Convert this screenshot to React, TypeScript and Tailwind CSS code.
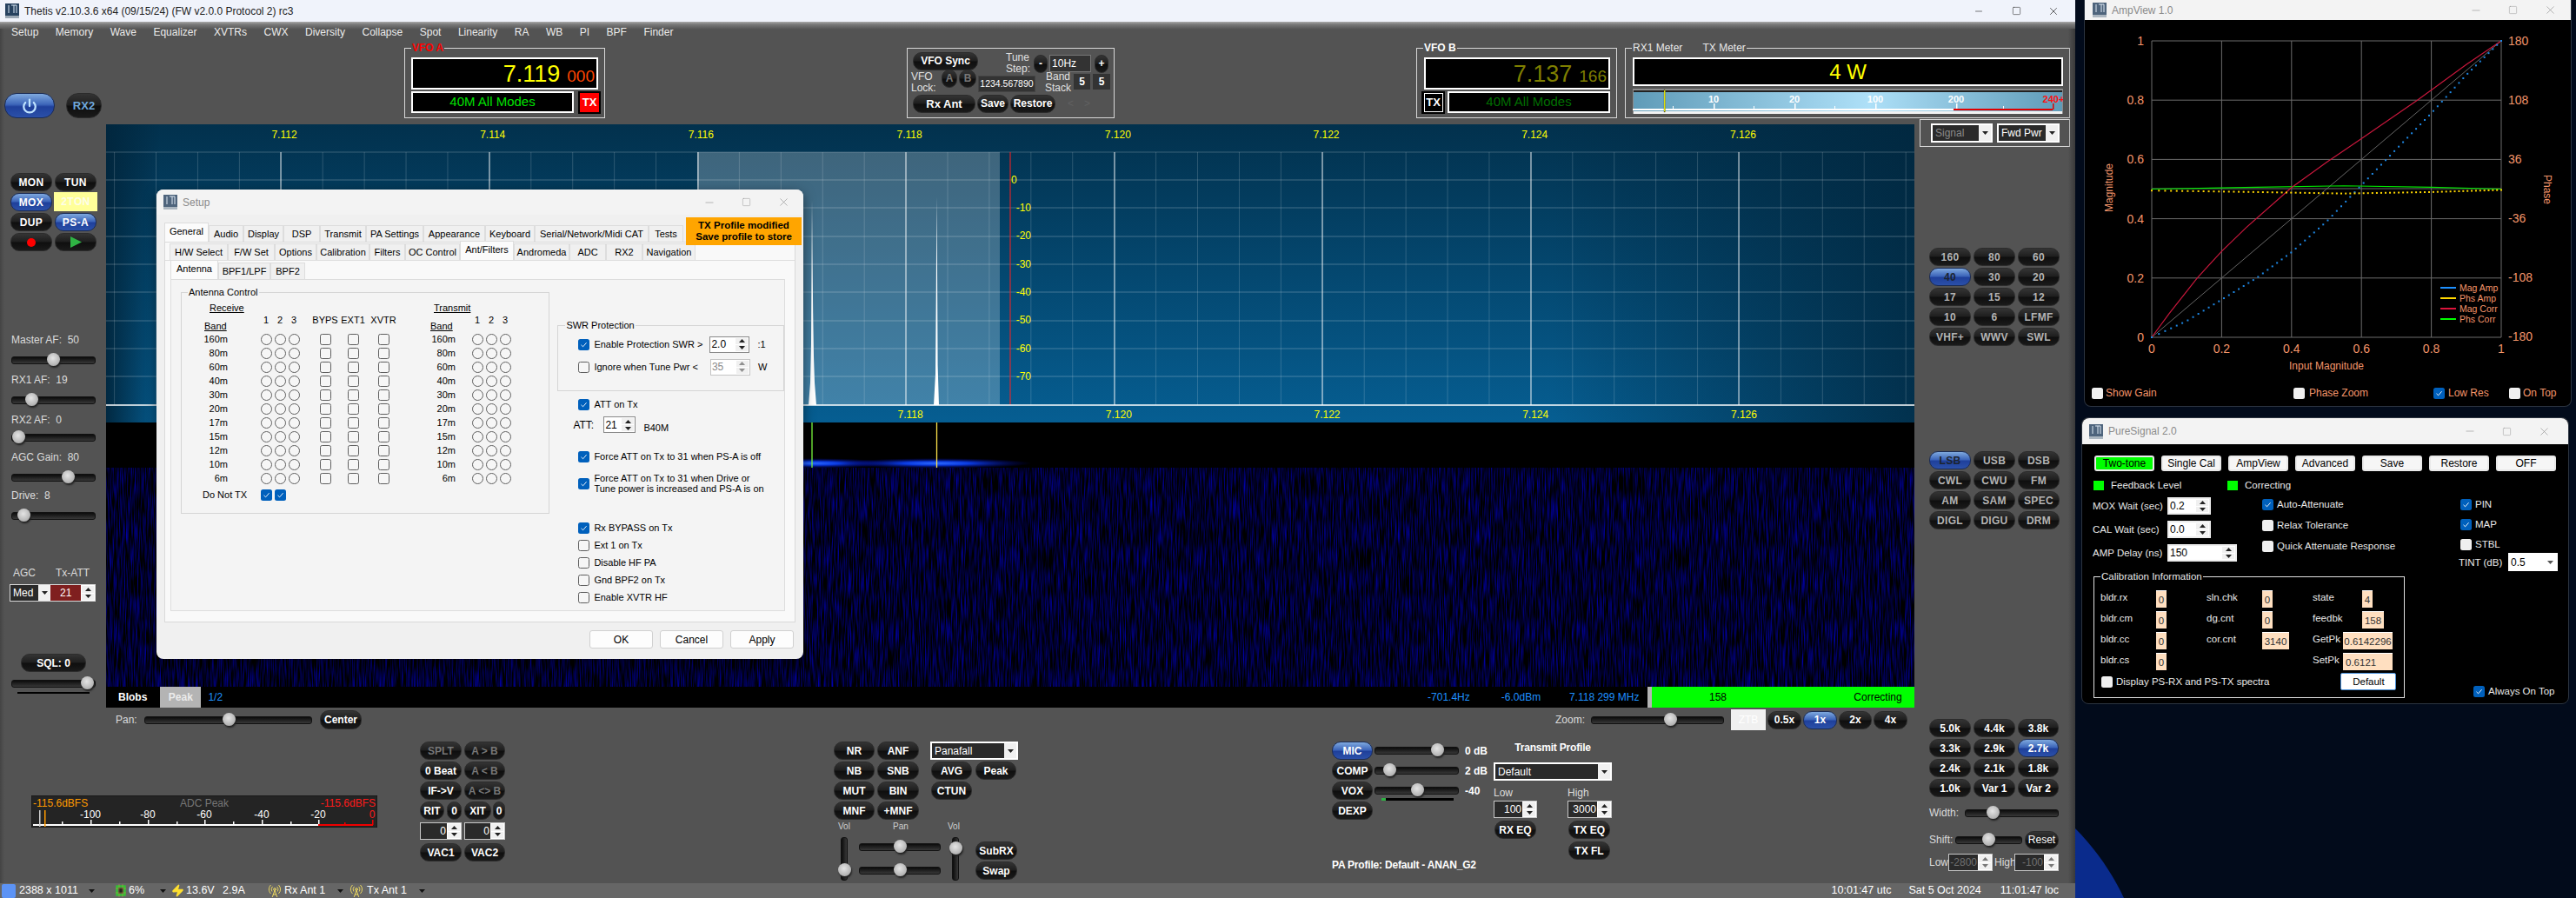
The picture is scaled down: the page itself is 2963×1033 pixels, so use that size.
import type { ReactNode } from "react"
import { Minus, Power, RadioTower, Square, X, Zap } from "lucide-react"

const cx = (...p: (string | false | undefined)[]) => p.filter(Boolean).join(" ")

function Btn({ children, className, blue, dim, gray }: { children?: ReactNode; className?: string; blue?: boolean; dim?: boolean; gray?: boolean }) {
  return (
    <div
      className={cx(
        "flex h-[21px] items-center justify-center whitespace-nowrap rounded-[10px] border text-[12px] font-bold",
        blue
          ? "border-[#1b2c55] bg-[linear-gradient(180deg,#7fa9de_0%,#3d66ba_45%,#1f409b_55%,#2b50a9_100%)]"
          : "border-[#2c2c2c] bg-[linear-gradient(180deg,#343434_0%,#1e1e1e_48%,#0e0e0e_52%,#1a1a1a_100%)]",
        dim ? "text-[#777777]" : gray ? (blue ? "text-[#1c2430]" : "text-[#b4b4b4]") : "text-white",
        className,
      )}
    >
      {children}
    </div>
  )
}

function Slider({ at, className }: { at: number; className?: string }) {
  return (
    <div className={cx("relative h-[9px] rounded-[3px] border border-[#111111] bg-[linear-gradient(180deg,#0c0c0c,#383838)]", className)}>
      <Thumb style={{ left: at - 8, top: -5 }} />
    </div>
  )
}

function Thumb({ style }: { style: { left?: number; top?: number } }) {
  return <div style={style} className="absolute h-[15px] w-[15px] rounded-full bg-[radial-gradient(circle_at_45%_40%,#e4e4e4,#b9b9b9_60%,#8c8c8c)] shadow-[1px_2px_2px_#222222]" />
}

function VSlider({ at, className }: { at: number; className?: string }) {
  return (
    <div className={cx("relative h-[50px] w-[8px] rounded-[3px] border border-[#111111] bg-[linear-gradient(90deg,#0c0c0c,#383838)]", className)}>
      <Thumb style={{ left: -4, top: at }} />
    </div>
  )
}

function Tri({ up, c = "#222222" }: { up?: boolean; c?: string }) {
  return (
    <svg width="7" height="4" viewBox="0 0 7 4">
      <path d={up ? "M3.5 0L7 4H0z" : "M0 0h7L3.5 4z"} fill={c} />
    </svg>
  )
}

function SpinCol({ className, c }: { className?: string; c?: string }) {
  return (
    <div className={cx("flex h-full w-[16px] shrink-0 flex-col gap-[1px] bg-white p-[1px]", className)}>
      <div className="flex flex-1 items-center justify-center bg-[#f0f0f0]"><Tri up c={c} /></div>
      <div className="flex flex-1 items-center justify-center bg-[#f0f0f0]"><Tri c={c} /></div>
    </div>
  )
}

function DarkSpin({ value, dim, className }: { value: string; dim?: boolean; className?: string }) {
  return (
    <div className={cx("flex h-[20px] items-stretch border border-[#c8c8c8] bg-[#2a2a2a]", className)}>
      <div className={cx("flex min-w-0 flex-1 items-center justify-end pr-[1px] text-[12px]", dim ? "text-[#707070]" : "text-white")}>{value}</div>
      <SpinCol className="w-[14px] bg-[#dddddd]" c={dim ? "#777777" : "#222222"} />
    </div>
  )
}

function DarkSelect({ value, className, dim }: { value: string; className?: string; dim?: boolean }) {
  return (
    <div className={cx("flex items-stretch border-2 border-white bg-[#2a2a2a]", className)}>
      <div className={cx("flex flex-1 items-center pl-[3px] text-[12px]", dim ? "text-[#8a8a8a]" : "text-white")}>{value}</div>
      <div className="flex w-[14px] items-center justify-center bg-[#f0f0f0]"><Tri /></div>
    </div>
  )
}

function AppIcon({ dim }: { dim?: boolean }) {
  return (
    <svg width="16" height="17" viewBox="0 0 16 17" className={cx("shrink-0", dim && "opacity-80")}>
      <rect width="16" height="14" fill="#26415f" />
      <path d="M4 2v9M7 2h6M10 2v9M13 2v9" stroke="#d7e6f5" strokeWidth="1" fill="none" />
      <rect y="14" width="16" height="3" fill="#9aa7b4" />
    </svg>
  )
}

function WinBtns({ className }: { className?: string }) {
  return (
    <div className={cx("ml-auto flex items-center text-[#8c8c8c]", className)}>
      <Minus size={14} strokeWidth={1} />
      <Square size={11} strokeWidth={1} className="ml-[30px]" />
      <X size={15} strokeWidth={1} className="ml-[30px]" />
    </div>
  )
}

function Check({ on, dark, label, className, gap = "ml-[5px]" }: { on?: boolean; dark?: boolean; label?: ReactNode; className?: string; gap?: string }) {
  return (
    <div className={cx("flex items-center whitespace-nowrap", className)}>
      <div
        className={cx(
          "flex h-[13px] w-[13px] shrink-0 items-center justify-center rounded-[2.5px]",
          on ? "bg-[#0060bc]" : dark ? "bg-[#f0f0f0]" : "border border-[#5f5f5f] bg-[#f6f6f6]",
        )}
      >
        {on && (
          <svg width="9" height="9" viewBox="0 0 9 9">
            <path d="M1.5 4.8L3.6 6.8L7.6 2.2" fill="none" stroke="#ffffff" strokeWidth="0.9" />
          </svg>
        )}
      </div>
      {label != null && <span className={gap}>{label}</span>}
    </div>
  )
}

function Radio() {
  return <div className="h-[13px] w-[13px] rounded-full border border-[#5f5f5f] bg-[#f6f6f6]" />
}

function LightSpin({ value, className, disabled }: { value: string; className?: string; disabled?: boolean }) {
  return (
    <div className={cx("flex h-[19px] items-stretch border bg-white text-[12px]", disabled ? "border-[#c4c4c4] text-[#8a8a8a]" : "border-[#8a8a8a] text-black", className)}>
      <div className="flex flex-1 items-center pl-[1px]">{value}</div>
      <SpinCol className="w-[14px]" c={disabled ? "#909090" : "#222222"} />
    </div>
  )
}

const bands = ["160m", "80m", "60m", "40m", "30m", "20m", "17m", "15m", "12m", "10m", "6m"]

const tabs1: [string, string][] = [
  ["General", "w-[51px]"], ["Audio", "w-[40px]"], ["Display", "w-[46px]"], ["DSP", "w-[42px]"], ["Transmit", "w-[53px]"],
  ["PA Settings", "w-[66px]"], ["Appearance", "w-[71px]"], ["Keyboard", "w-[57px]"], ["Serial/Network/Midi CAT", "w-[131px]"], ["Tests", "w-[40px]"],
]
const tabs2: [string, string][] = [
  ["H/W Select", "w-[67px]"], ["F/W Set", "w-[54px]"], ["Options", "w-[48px]"], ["Calibration", "w-[61px]"], ["Filters", "w-[41px]"], ["OC Control", "w-[63px]"],
  ["Ant/Filters", "w-[62px]"], ["Andromeda", "w-[64px]"], ["ADC", "w-[42px]"], ["RX2", "w-[42px]"], ["Navigation", "w-[61px]"],
]
const tabs3: [string, string][] = [["Antenna", "w-[55px]"], ["BPF1/LPF", "w-[60px]"], ["BPF2", "w-[40px]"]]

function TabRow({ items, active, className }: { items: [string, string][]; active: string; className?: string }) {
  return (
    <div className={cx("flex items-end", className)}>
      {items.map(([t, w]) => (
        <div
          key={t}
          className={cx(
            "flex shrink-0 items-center justify-center whitespace-nowrap border border-b-0 border-[#dddddd]",
            t === active ? "h-[22px] bg-[#fbfbfb] pb-[3px]" : "h-[19px] bg-[#f0f0f0]",
            w,
          )}
        >
          {t}
        </div>
      ))}
    </div>
  )
}

function AntennaGroup() {
  return (
    <fieldset className="ml-[11px] mt-[7px] h-[262px] w-[425px] border border-[#d5d5d5]">
      <legend className="ml-[7px] px-[1px] leading-[14px]">Antenna Control</legend>
      <div className="mt-[4px] grid grid-cols-[53px_36px_16px_16px_16px_12px_32px_32px_38px_64px_17px_16px_16px_16px] auto-rows-[16px]">
        <div className="col-span-9 h-[16px] pl-[32px] underline">Receive</div>
        <div className="col-span-5 whitespace-nowrap pl-[39px] underline">Transmit</div>
        <div className="col-span-1 row-span-1 translate-y-[5px] pl-[26px] underline">Band</div>
        <div />
        {["1", "2", "3"].map(n => <div key={n} className="-translate-y-[2px] text-center">{n}</div>)}
        <div />
        {["BYPS", "EXT1", "XVTR"].map(n => <div key={n} className="-translate-y-[2px] text-center">{n}</div>)}
        <div className="translate-y-[5px] pl-[35px] underline">Band</div>
        <div />
        {["1", "2", "3"].map(n => <div key={n + "t"} className="-translate-y-[2px] text-center">{n}</div>)}
      </div>
      <div className="mt-[3px] grid grid-cols-[53px_36px_16px_16px_16px_12px_32px_32px_38px_64px_17px_16px_16px_16px] auto-rows-[16px] items-center justify-items-center">
        {bands.map(b => (
          <div key={b} className="contents">
            <div className="justify-self-end">{b}</div>
            <div />
            <Radio /><Radio /><Radio />
            <div />
            <Check /><Check /><Check />
            <div className="justify-self-end">{b}</div>
            <div />
            <Radio /><Radio /><Radio />
          </div>
        ))}
      </div>
      <div className="mt-[3px] flex h-[16px] items-center pl-[24px]">
        <span className="w-[66px]">Do Not TX</span>
        <Check on className="ml-[1px]" />
        <Check on className="ml-[3px]" />
      </div>
    </fieldset>
  )
}

function SetupDialog() {
  return (
    <div className="absolute left-[180px] top-[218px] flex h-[540px] w-[744px] flex-col rounded-[8px] bg-[#f0f0f0] text-[11px] leading-[14px] text-black shadow-[0_4px_14px_rgba(0,0,0,0.5)]">
      <div className="flex h-[29px] items-center rounded-t-[8px] bg-[#f3f3f3] pl-[8px] pr-[15px]">
        <AppIcon dim />
        <span className="ml-[6px] text-[12px] text-[#8a8a8a]">Setup</span>
        <WinBtns />
      </div>
      <div className="relative mx-[9px] mt-[9px]">
        <TabRow items={tabs1} active="General" />
        <div className="absolute left-[600px] top-[-6px] flex h-[32px] w-[133px] flex-col items-center justify-center bg-[#ffa500] text-[11.5px] font-bold leading-[13px]">
          <div>TX Profile modified</div>
          <div>Save profile to store</div>
        </div>
        <div className="h-[438px] border border-[#d9d9d9] bg-[#f9f9f9]">
          <TabRow items={tabs2} active="Ant/Filters" className="ml-[5px] h-[20px]" />
          <div className="mx-[0px] h-[415px] border-t border-[#dddddd] pl-[6px] pr-[1px]">
            <TabRow items={tabs3} active="Antenna" className="h-[21px] pt-[0px]" />
            <div className="mr-[10px] flex h-[382px] border border-[#dddddd] bg-[#f4f4f4]">
              <AntennaGroup />
              <div className="ml-[9px] flex w-[261px] flex-col">
                <fieldset className="mt-[45px] h-[83px] border border-[#d5d5d5]">
                  <legend className="ml-[8px] px-[1px] leading-[14px]">SWR Protection</legend>
                  <div className="ml-[23px] mt-[6px] flex h-[18px] items-center">
                    <Check on label="Enable Protection SWR >" />
                    <LightSpin value="2.0" className="ml-[8px] w-[46px]" />
                    <span className="ml-[9px]">:1</span>
                  </div>
                  <div className="ml-[23px] mt-[8px] flex h-[18px] items-center">
                    <Check label="Ignore when Tune Pwr <" />
                    <LightSpin value="35" disabled className="ml-[14px] w-[46px]" />
                    <span className="ml-[9px]">W</span>
                  </div>
                </fieldset>
                <Check on label="ATT on Tx" className="ml-[24px] mt-[7px] h-[16px]" />
                <div className="ml-[18px] mt-[6px] flex h-[19px] items-center">
                  <span className="w-[35px] text-[12px]">ATT:</span>
                  <LightSpin value="21" className="w-[37px]" />
                  <span className="ml-[9px] mt-[7px]">B40M</span>
                </div>
                <Check on label="Force ATT on Tx to 31 when PS-A is off" className="ml-[24px] mt-[19px] h-[16px]" />
                <Check
                  on
                  label={<>Force ATT on Tx to 31 when Drive or<br />Tune power is increased and PS-A is on</>}
                  className="ml-[24px] mt-[10px] h-[26px] leading-[12px]"
                />
                <Check on label="Rx BYPASS on Tx" className="ml-[24px] mt-[30px] h-[16px]" />
                <Check label="Ext 1 on Tx" className="ml-[24px] mt-[4px] h-[16px]" />
                <Check label="Disable HF PA" className="ml-[24px] mt-[4px] h-[16px]" />
                <Check label="Gnd BPF2 on Tx" className="ml-[24px] mt-[4px] h-[16px]" />
                <Check label="Enable XVTR HF" className="ml-[24px] mt-[4px] h-[16px]" />
              </div>
            </div>
          </div>
        </div>
      </div>
      <div className="ml-[498px] mt-[9px] flex gap-[8px]">
        {["OK", "Cancel", "Apply"].map(t => (
          <div key={t} className="flex h-[21px] w-[73px] items-center justify-center rounded-[3px] border border-[#d0d0d0] bg-[#fdfdfd] text-[12px]">{t}</div>
        ))}
      </div>
    </div>
  )
}

const sX = (t: number) => 2474 + 402 * t
const sY = (v: number) => 388 - 341 * v

function lerp(pts: [number, number][], t: number) {
  for (let i = 1; i < pts.length; i++) {
    if (t <= pts[i][0]) {
      const [a, b] = pts[i - 1]
      const [c, d] = pts[i]
      return b + ((t - a) / (c - a)) * (d - b)
    }
  }
  return pts[pts.length - 1][1]
}

const magAmp: [number, number][] = [[0, 0], [0.1, 0.055], [0.2, 0.127], [0.3, 0.2], [0.4, 0.287], [0.5, 0.39], [0.6, 0.513], [0.7, 0.635], [0.8, 0.756], [0.9, 0.885], [1, 1]]
const magCorr: [number, number][] = [[0, 0], [0.05, 0.08], [0.13, 0.2], [0.2, 0.29], [0.27, 0.37], [0.4, 0.505], [0.5, 0.59], [0.6, 0.67], [0.76, 0.8], [0.9, 0.92], [1, 1]]
const phsAmp: [number, number][] = [[0, 0.495], [0.3, 0.49], [0.55, 0.485], [0.8, 0.49], [1, 0.497]]
const phsCorr: [number, number][] = [[0, 0.5], [0.3, 0.506], [0.55, 0.511], [0.8, 0.506], [1, 0.5]]
const dots = Array.from({ length: 76 }, (_, i) => (i / 75) ** 0.9)
const line = (pts: [number, number][]) => pts.map(([a, b]) => `${sX(a)},${sY(b)}`).join(" ")

function AmpChart() {
  const coral = "#f4956a"
  const xs = [0, 0.2, 0.4, 0.6, 0.8, 1]
  return (
    <svg viewBox="2397 23 561 417" className="h-[417px] w-[561px]" fontFamily="'Liberation Sans', sans-serif">
      {xs.map(v => (
        <g key={v} stroke="#6c6c6c" strokeWidth="1">
          <line x1={sX(v)} x2={sX(v)} y1={47} y2={388} />
          <line x1={2474} x2={2876} y1={sY(v)} y2={sY(v)} />
        </g>
      ))}
      <line x1={2474} x2={2876} y1={217} y2={217} stroke="#6c6c6c" />
      <line x1={sX(0)} y1={sY(0)} x2={sX(1)} y2={sY(1)} stroke="#666666" />
      <polyline points={line(phsCorr)} fill="none" stroke="#00e800" strokeWidth="1.2" />
      <polyline points={line(magCorr)} fill="none" stroke="#c8173c" strokeWidth="1.2" />
      {dots.map(t => (
        <g key={t}>
          <rect x={sX(t) - 1} y={sY(lerp(magAmp, t)) - 1} width="2" height="2" fill="#1e88e5" />
          <rect x={sX(t) - 1} y={sY(lerp(phsAmp, t)) - 1} width="2" height="2" fill="#ffd700" />
        </g>
      ))}
      <g fill={coral} fontSize="14">
        {xs.map(v => <text key={v} x={2465} y={sY(v) + 5} textAnchor="end">{v}</text>)}
        {xs.map(v => <text key={v} x={sX(v)} y={406} textAnchor="middle">{v}</text>)}
        {["180", "108", "36", "-36", "-108", "-180"].map((t, i) => <text key={t} x={2884} y={52 + i * 68} >{t}</text>)}
      </g>
      <g fill={coral} fontSize="12">
        <text x={2675} y={425} textAnchor="middle">Input Magnitude</text>
        <text transform="translate(2429 216) rotate(-90)" textAnchor="middle">Magnitude</text>
        <text transform="translate(2925 218) rotate(90)" textAnchor="middle">Phase</text>
      </g>
      {[["Mag Amp", "#1e90ff"], ["Phs Amp", "#ffd700"], ["Mag Corr", "#dc143c"], ["Phs Corr", "#00ff00"]].map(([t, c], i) => (
        <g key={t}>
          <rect x={2806} y={330 + i * 12} width="18" height="2" fill={c} />
          <text x={2828} y={335 + i * 12} fontSize="10.5" fill={coral}>{t}</text>
        </g>
      ))}
    </svg>
  )
}

function AmpView() {
  return (
    <div className="absolute left-[2397px] top-0 flex h-[468px] w-[561px] flex-col rounded-b-[8px] border-x border-b border-[#2c3440] bg-black">
      <div className="flex h-[23px] shrink-0 items-center bg-[#f3f3f3] pl-[9px] pr-[16px] text-[12px] text-[#8a8a8a]">
        <AppIcon dim />
        <span className="ml-[6px]">AmpView 1.0</span>
        <WinBtns />
      </div>
      <AmpChart />
      <div className="ml-[8px] mt-[5px] flex h-[14px] items-center text-[12px] text-[#f4956a]">
        <Check dark label="Show Gain" className="w-[232px]" gap="ml-[3px]" />
        <Check dark label="Phase Zoom" className="w-[161px]" gap="ml-[5px]" />
        <Check on label="Low Res" className="w-[87px]" gap="ml-[4px]" />
        <Check dark label="On Top" gap="ml-[3px]" />
      </div>
    </div>
  )
}

function PsSpin({ value, className }: { value: string; className?: string }) {
  return (
    <div className={cx("flex h-[20px] items-stretch border-2 border-[#ececec] bg-white text-[12px] text-black", className)}>
      <div className="flex flex-1 items-center pl-[1px]">{value}</div>
      <SpinCol className="w-[14px]" />
    </div>
  )
}

function CalCell({ label, value, lw, bw }: { label: string; value: string; lw: string; bw: string }) {
  return (
    <div className="flex h-[20px] items-start">
      <span className={cx("pt-[1px]", lw)}>{label}</span>
      <div className={cx("flex h-[20px] items-center justify-center border-t border-[#ffffff] bg-[#ffdfc0] text-[11.5px] text-[#333333]", bw)}>{value}</div>
    </div>
  )
}

function PureSignal() {
  return (
    <div className="absolute left-[2394px] top-[480px] flex h-[330px] w-[561px] flex-col rounded-[8px] border border-[#2c3440] bg-black text-[11.5px] leading-[14px] text-[#e8e8e8]">
      <div className="flex h-[30px] shrink-0 items-center rounded-t-[8px] bg-[#f3f3f3] pl-[8px] pr-[20px] text-[12px] text-[#8a8a8a]">
        <AppIcon dim />
        <span className="ml-[6px]">PureSignal 2.0</span>
        <WinBtns />
      </div>
      <div className="ml-[14px] mt-[13px] flex gap-[8px] text-[12px] text-black">
        {["Two-tone", "Single Cal", "AmpView", "Advanced", "Save", "Restore", "OFF"].map((t, i) => (
          <div key={t} className={cx("flex h-[18px] w-[69px] items-center justify-center rounded-[3px] border-2 border-[#e9e9e9]", i === 0 ? "bg-[#00ff00]" : "bg-[#f6f6f6]")}>{t}</div>
        ))}
      </div>
      <div className="ml-[13px] mt-[11px] flex h-[10px] items-center">
        <div className="h-[11px] w-[12px] bg-[#00ff00]" />
        <span className="ml-[8px] w-[134px]">Feedback Level</span>
        <div className="h-[11px] w-[12px] bg-[#00ff00]" />
        <span className="ml-[8px]">Correcting</span>
      </div>
      <div className="mt-[9px] flex">
        <div className="ml-[12px] w-[360px]">
          <div className="flex">
            <div className="flex w-[195px] flex-col gap-[7px]">
              <div className="flex items-center"><span className="w-[86px]">MOX Wait (sec)</span><PsSpin value="0.2" className="w-[50px]" /></div>
              <div className="flex items-center"><span className="w-[86px]">CAL Wait (sec)</span><PsSpin value="0.0" className="w-[50px]" /></div>
              <div className="flex items-center"><span className="w-[86px]">AMP Delay (ns)</span><PsSpin value="150" className="w-[80px]" /></div>
            </div>
            <div className="flex flex-col gap-[8px]">
              <Check on label="Auto-Attenuate" className="h-[16px]" gap="ml-[4px]" />
              <Check dark label="Relax Tolerance" className="h-[16px]" gap="ml-[4px]" />
              <Check dark label="Quick Attenuate Response" className="h-[16px]" gap="ml-[4px]" />
            </div>
          </div>
          <fieldset className="ml-[1px] mt-[10px] h-[147px] w-[358px] border border-[#e0e0e0]">
            <legend className="ml-[7px] px-[1px] leading-[14px]">Calibration Information</legend>
            <div className="ml-[7px] mt-[9px] grid grid-cols-[122px_122px_100px] gap-y-[4px]">
              <CalCell label="bldr.rx" value="0" lw="w-[64px]" bw="w-[12px]" />
              <CalCell label="sln.chk" value="0" lw="w-[64px]" bw="w-[12px]" />
              <CalCell label="state" value="4" lw="w-[57px]" bw="w-[12px]" />
              <CalCell label="bldr.cm" value="0" lw="w-[64px]" bw="w-[12px]" />
              <CalCell label="dg.cnt" value="0" lw="w-[64px]" bw="w-[12px]" />
              <CalCell label="feedbk" value="158" lw="w-[57px]" bw="w-[25px]" />
              <CalCell label="bldr.cc" value="0" lw="w-[64px]" bw="w-[12px]" />
              <CalCell label="cor.cnt" value="3140" lw="w-[64px]" bw="w-[31px]" />
              <CalCell label="GetPk" value="0.6142296" lw="w-[35px]" bw="w-[57px]" />
              <CalCell label="bldr.cs" value="0" lw="w-[64px]" bw="w-[12px]" />
              <div />
              <CalCell label="SetPk" value="0.6121" lw="w-[35px]" bw="w-[57px] justify-start pl-[3px]" />
            </div>
            <div className="mt-[3px] flex items-center">
              <Check dark label="Display PS-RX and PS-TX spectra" className="ml-[8px]" gap="ml-[4px]" />
              <div className="ml-[82px] flex h-[20px] w-[64px] items-center justify-center rounded-[2px] border border-[#4a90d9] bg-white text-black">Default</div>
            </div>
          </fieldset>
        </div>
        <div className="ml-[61px] flex w-[120px] flex-col">
          <div className="ml-[2px] flex flex-col gap-[7px]">
            <Check on label="PIN" className="h-[16px]" gap="ml-[4px]" />
            <Check on label="MAP" className="h-[16px]" gap="ml-[4px]" />
            <Check dark label="STBL" className="h-[16px]" gap="ml-[4px]" />
          </div>
          <div className="mt-[2px] flex items-center">
            <span className="w-[57px]">TINT (dB)</span>
            <div className="flex h-[21px] w-[57px] items-center justify-between bg-white pl-[3px] pr-[5px] text-[12px] text-black">0.5<Tri c="#555555" /></div>
          </div>
          <Check on label="Always On Top" className="ml-[17px] mt-[131px]" gap="ml-[4px]" />
        </div>
      </div>
    </div>
  )
}

const vLines = Array.from({ length: 44 }, (_, i) => 131.6 + i * 47.92)
const majors = [323, 563, 803, 1042, 1282, 1521, 1761, 2000]
const hLines = [207, 239, 272, 304, 336, 369, 401, 433]
const scale = ["7.112", "7.114", "7.116", "7.118", "7.120", "7.122", "7.124", "7.126"]

function Spectrum() {
  return (
    <svg viewBox="122 143 2080 343" className="block h-[343px] w-[2080px] shrink-0" fontFamily="'Liberation Sans', sans-serif">
      <defs>
        <linearGradient id="bg" x1="0" x2="0" y1="0" y2="1">
          <stop offset="0" stopColor="#02314d" />
          <stop offset="1" stopColor="#065e92" />
        </linearGradient>
        <linearGradient id="edge" x1="0" x2="1" y1="0" y2="0">
          <stop offset="0" stopColor="#01263d" stopOpacity="0.95" />
          <stop offset="0.03" stopColor="#01263d" stopOpacity="0" />
          <stop offset="0.8" stopColor="#01263d" stopOpacity="0" />
          <stop offset="1" stopColor="#01263d" stopOpacity="0.8" />
        </linearGradient>
      </defs>
      <rect x="122" y="143" width="2080" height="343" fill="url(#bg)" />
      <rect x="122" y="143" width="2080" height="343" fill="url(#edge)" />
      <rect x="802" y="175" width="348" height="291" fill="#ffffff" opacity="0.24" />
      {vLines.map(x => <line key={x} x1={x} x2={x} y1={175} y2={466} stroke="#ffffff" strokeOpacity="0.17" />)}
      {majors.map(x => <line key={x} x1={x} x2={x} y1={175} y2={466} stroke="#ffffff" strokeOpacity="0.85" />)}
      {hLines.map(y => <line key={y} x1={122} x2={2202} y1={y} y2={y} stroke="#ffffff" strokeOpacity="0.25" />)}
      <line x1={122} x2={2202} y1={175} y2={175} stroke="#ffffff" strokeOpacity="0.22" />
      <line x1={1162} x2={1162} y1={175} y2={466} stroke="#ff2020" />
      <polygon points="930,466 932,440 933,395 933.6,290 934,230 934.5,290 935.2,360 936,410 937,440 939,466" fill="#ffffff" />
      <polygon points="1074,466 1076,430 1076.8,330 1077.3,226 1078,310 1078.6,420 1080,466" fill="#ffffff" />
      <line x1={122} x2={2202} y1={466} y2={466} stroke="#ffffff" strokeWidth="1.5" />
      <g fill="#ffff00" fontSize="12">
        {scale.map((t, i) => <text key={t} x={327 + i * 239.7} y={159} textAnchor="middle">{t}</text>)}
        {scale.map((t, i) => <text key={t} x={328 + i * 239.7} y={481} textAnchor="middle">{t}</text>)}
        <text x={1163} y={211}>0</text>
        {[-10, -20, -30, -40, -50, -60, -70].map((d, i) => <text key={d} x={1186} y={243 + i * 32.3} textAnchor="end">{d}</text>)}
      </g>
    </svg>
  )
}

function Waterfall() {
  return (
    <svg viewBox="122 486 2080 304" className="block h-[304px] w-[2080px] shrink-0">
      <defs>
        <filter id="wf" x="0" y="0" width="100%" height="100%" colorInterpolationFilters="sRGB">
          <feTurbulence type="fractalNoise" baseFrequency="0.7 0.035" numOctaves="2" seed="7" />
          <feColorMatrix values="0 0 0 0 0  0 0 0 0 0  1.3 0 0 0 -0.48  0 0 0 0 1" />
        </filter>
        <radialGradient id="blob">
          <stop offset="0" stopColor="#2f6bff" />
          <stop offset="0.35" stopColor="#0a3be0" />
          <stop offset="1" stopColor="#00008a" stopOpacity="0" />
        </radialGradient>
      </defs>
      <rect x="122" y="486" width="2080" height="304" fill="#000000" />
      <rect x="122" y="538" width="2080" height="252" filter="url(#wf)" />
      <ellipse cx="934" cy="533" rx="90" ry="6" fill="url(#blob)" />
      <ellipse cx="1077" cy="533" rx="110" ry="6" fill="url(#blob)" />
      <line x1={934} x2={934} y1={486} y2={538} stroke="#7fff40" strokeWidth="1.3" />
      <line x1={1077.5} x2={1077.5} y1={486} y2={538} stroke="#ffe44a" strokeWidth="1.3" />
    </svg>
  )
}

function TopMeter() {
  const majorT = [1971, 2064, 2157, 2250]
  const minorT = [1924, 2017, 2110, 2304]
  return (
    <svg viewBox="1878 102 495 29" className="block h-[29px] w-[495px]" fontFamily="'Liberation Sans', sans-serif">
      <defs>
        <linearGradient id="mb" x1="0" x2="1" y1="0" y2="0">
          <stop offset="0" stopColor="#5f9bb8" />
          <stop offset="0.55" stopColor="#aee0f8" />
          <stop offset="1" stopColor="#5f9bb8" />
        </linearGradient>
      </defs>
      <rect x="1878" y="102" width="495" height="29" fill="#8b8b8b" />
      <rect x="1879" y="104" width="493" height="2" fill="#222222" />
      <rect x="1879" y="106" width="493" height="22" fill="url(#mb)" />
      <rect x="1879" y="128" width="493" height="3" fill="#f2f2f2" />
      <rect x="1878" y="125" width="369" height="2" fill="#ffffff" />
      <rect x="2247" y="125" width="114" height="2" fill="#e00000" />
      {majorT.map(x => <rect key={x} x={x} y={119} width="1.5" height="6" fill="#ffffff" />)}
      {minorT.map(x => <rect key={x} x={x} y={122} width="1" height="3" fill="#ffffff" />)}
      <rect x="2361" y="119" width="1.5" height="7" fill="#e00000" />
      <g fontSize="11" fontWeight="bold" fill="#ffffff" textAnchor="middle">
        {[["10", 1971], ["20", 2064], ["100", 2157], ["200", 2250]].map(([t, x]) => <text key={t} x={x} y={118}>{t}</text>)}
        <text x={2362} y={118} fill="#ff1010" textAnchor="middle">240+</text>
      </g>
      <rect x="1914" y="103" width="1.5" height="26" fill="#ffff00" stroke="#333333" strokeWidth="0.3" />
    </svg>
  )
}

function AdcMeter() {
  const marks: [string, number][] = [["-100", 104], ["-80", 170], ["-60", 235], ["-40", 301], ["-20", 366]]
  return (
    <svg viewBox="36 915 398 37" className="block h-[37px] w-[398px]" fontFamily="'Liberation Sans', sans-serif">
      <rect x="36" y="915" width="398" height="37" fill="#242424" stroke="#111111" />
      <text x={38} y={928} fontSize="12" fill="#ff9a00">-115.6dBFS</text>
      <text x={235} y={928} fontSize="12" fill="#777777" textAnchor="middle">ADC Peak</text>
      <text x={432} y={928} fontSize="12" fill="#ff1a1a" textAnchor="end">-115.6dBFS</text>
      <g fontSize="12" fill="#ffffff" textAnchor="middle">
        {marks.map(([t, x]) => <text key={t} x={x} y={941}>{t}</text>)}
      </g>
      <text x={428} y={941} fontSize="12" fill="#ff1a1a" textAnchor="middle">0</text>
      {marks.map(([t, x]) => <rect key={t} x={x} y={943} width="1.5" height="6" fill="#ffffff" />)}
      {[71, 137, 203, 268, 334].map(x => <rect key={x} x={x} y={945} width="1.5" height="3" fill="#ffffff" />)}
      <rect x="38" y="948" width="328" height="2" fill="#ffffff" />
      <rect x="366" y="948" width="63" height="2" fill="#f00000" />
      <rect x="396" y="946" width="1.5" height="3" fill="#f00000" />
      <rect x="428" y="943" width="1.5" height="6" fill="#f00000" />
      <rect x="45" y="932" width="1.5" height="19" fill="#cfcfcf" />
      <rect x="51" y="932" width="1.5" height="19" fill="#ff9a00" />
    </svg>
  )
}

function Legend({ children, className }: { children: ReactNode; className?: string }) {
  return <legend className={cx("ml-[7px] px-[1px] text-[12px] leading-[14px]", className)}>{children}</legend>
}

function FreqBox({ main, sub, mainC, subC, className }: { main: string; sub: string; mainC: string; subC: string; className?: string }) {
  return (
    <div className={cx("flex h-[37px] items-baseline justify-end border-2 border-white bg-black pr-[2px] pt-[1px]", className)}>
      <span className={cx("text-[27px] leading-[32px]", mainC)}>{main}</span>
      <span className={cx("ml-[8px] text-[19px] leading-[32px]", subC)}>{sub}</span>
    </div>
  )
}

function TopBand() {
  return (
    <div className="h-[118px] shrink-0 bg-[linear-gradient(180deg,#ababab_0px,#7a7a7a_3px,#535353_9px)]">
      <div className="flex h-[19px] gap-[19.5px] pl-[13px] pt-[5px] text-[12px] leading-[14px] text-[#ececec]">
        {["Setup", "Memory", "Wave", "Equalizer", "XVTRs", "CWX", "Diversity", "Collapse", "Spot", "Linearity", "RA", "WB", "PI", "BPF", "Finder"].map(t => <span key={t}>{t}</span>)}
      </div>
      <div className="flex h-[99px] items-start text-white">
        <Btn blue className="ml-[5px] mt-[63px] h-[29px] w-[58px] rounded-[14px]"><Power size={18} strokeWidth={3} className="text-[#bfe3ff]" /></Btn>
        <Btn className="ml-[13px] mt-[63px] h-[29px] w-[41px] rounded-[14px] text-[13px] text-[#6fa8dc]"><span className="text-[#6fa8dc]">RX2</span></Btn>
        <fieldset className="ml-[348px] mt-[4px] h-[88px] w-[231px] shrink-0 border border-[#d8d8d8]">
          <Legend className="font-bold text-[#ff0000]">VFO A</Legend>
          <FreqBox main="7.119" sub="000" mainC="text-[#ffff00]" subC="text-[#ff4500]" className="ml-[7px] mt-[4px] w-[215px]" />
          <div className="ml-[7px] mt-[2px] flex h-[26px] w-[219px] items-start">
            <div className="flex h-[25px] w-[187px] items-center justify-center border-2 border-white bg-black text-[15px] text-[#00e000]">40M All Modes</div>
            <div className="ml-[5px] flex h-[26px] w-[26px] items-center justify-center bg-black"><div className="flex h-[22px] w-[22px] items-center justify-center bg-[#ff0000] text-[13px] font-bold">TX</div></div>
          </div>
        </fieldset>
        <div className="ml-[347px] mt-[11px] flex h-[81px] w-[239px] shrink-0 flex-col border border-[#d8d8d8] text-[12px] leading-[13px] text-white">
          <div className="flex h-[24px] items-start pl-[6px] pt-[4px]">
            <Btn className="w-[75px] rounded-[10px]">VFO Sync</Btn>
            <div className="ml-[32px] text-[#e0e0e0]">Tune<br />Step:</div>
            <Btn className="ml-[4px] mt-[3px] h-[17px] w-[16px]">-</Btn>
            <div className="ml-[2px] mt-[3px] flex h-[20px] w-[48px] items-center border border-[#777777] bg-[#333333] pl-[2px]">10Hz</div>
            <Btn className="ml-[4px] mt-[3px] h-[17px] w-[16px]">+</Btn>
          </div>
          <div className="flex h-[29px] items-start">
            <div className="ml-[4px] mt-[2px] w-[35px] text-[#e0e0e0]">VFO<br />Lock:</div>
            <Btn dim className="mt-[0px] h-[21px] w-[18px] rounded-[6px]">A</Btn>
            <Btn dim className="ml-[2px] h-[21px] w-[20px] rounded-[6px]">B</Btn>
            <div className="ml-[2px] mt-[7px] flex h-[19px] w-[66px] items-center justify-center overflow-hidden border border-[#444444] bg-[#333333] text-[10.5px]">1234.567890</div>
            <div className="ml-[10px] mt-[2px] w-[32px] text-center text-[#e0e0e0]">Band<br />Stack</div>
            <div className="ml-[2px] mt-[5px] flex h-[18px] w-[19px] items-center justify-center bg-[#333333] font-bold">5</div>
            <div className="ml-[3px] mt-[5px] flex h-[18px] w-[20px] items-center justify-center bg-[#333333] font-bold">5</div>
          </div>
          <div className="flex items-center pl-[6px]">
            <Btn className="h-[19px] w-[72px] text-[13px]">Rx Ant</Btn>
            <Btn className="ml-[2px] h-[19px] w-[36px] text-[10px]">Save</Btn>
            <Btn className="ml-[2px] h-[19px] w-[52px] text-[10px]">Restore</Btn>
            <span className="ml-[14px] text-[#616161]">&lt;</span>
            <span className="ml-[12px] text-[#616161]">&gt;</span>
          </div>
        </div>
        <fieldset className="ml-[347px] mt-[4px] h-[88px] w-[231px] shrink-0 border border-[#d8d8d8]">
          <Legend className="font-bold">VFO B</Legend>
          <FreqBox main="7.137" sub="166" mainC="text-[#7f7f00]" subC="text-[#7f7f00]" className="ml-[8px] mt-[4px] w-[214px]" />
          <div className="ml-[5px] mt-[2px] flex h-[26px] items-start">
            <div className="flex h-[26px] w-[27px] items-center justify-center bg-black"><div className="flex h-[22px] w-[22px] items-center justify-center border border-white text-[13px] font-bold">TX</div></div>
            <div className="ml-[3px] flex h-[25px] w-[187px] items-center justify-center border-2 border-white bg-black text-[15px] text-[#006e00]">40M All Modes</div>
          </div>
        </fieldset>
        <fieldset className="ml-[9px] mt-[4px] h-[88px] w-[512px] shrink-0 border border-[#d8d8d8]">
          <Legend className="whitespace-pre text-[#e8e8e8]">RX1 Meter       TX Meter</Legend>
          <div className="ml-[8px] mt-[4px] flex h-[33px] w-[495px] items-center justify-center border-2 border-white bg-black text-[24px] text-[#ffff00]">4 W</div>
          <div className="ml-[8px] mt-[3px]"><TopMeter /></div>
        </fieldset>
      </div>
    </div>
  )
}

function AfSlider({ label, at, top, gap }: { label: string; at: number; top: string; gap: string }) {
  return (
    <>
      <div className={cx("whitespace-pre text-[12px] leading-[14px] text-[#dcdcdc]", top)}>{label}</div>
      <Slider at={at} className={cx("w-[97px]", gap)} />
    </>
  )
}

function LeftColumn() {
  return (
    <div className="relative w-[122px] shrink-0 pl-[13px] pt-[56px]">
      <div className="-ml-[1px] grid grid-cols-[48px_48px] auto-rows-[20px] gap-x-[3px] gap-y-[3px]">
        <Btn className="h-[20px] tracking-[0.4px]">MON</Btn>
        <Btn className="h-[20px] tracking-[0.4px]">TUN</Btn>
        <Btn blue className="h-[20px] tracking-[0.4px]">MOX</Btn>
        <div className="-m-[1px] flex items-center justify-center bg-[#ffff99] text-[12px] font-bold tracking-[0.4px] text-[#fdfde8]">2TON</div>
        <Btn className="h-[20px] tracking-[0.4px]">DUP</Btn>
        <Btn blue className="h-[20px] tracking-[0.4px]">PS-A</Btn>
        <Btn className="h-[20px]"><span className="h-[10px] w-[10px] rounded-full bg-[#ff0000]" /></Btn>
        <Btn className="h-[20px]"><svg width="13" height="13" viewBox="0 0 13 13"><path d="M0 0L13 6.5L0 13z" fill="#2fb344" /></svg></Btn>
      </div>
      <AfSlider label="Master AF:  50" at={48} top="mt-[96px]" gap="mt-[12px]" />
      <AfSlider label="RX1 AF:  19" at={23} top="mt-[11px]" gap="mt-[12px]" />
      <AfSlider label="RX2 AF:  0" at={8} top="mt-[11px]" gap="mt-[9px]" />
      <AfSlider label="AGC Gain:  80" at={65} top="mt-[11px]" gap="mt-[12px]" />
      <AfSlider label="Drive:  8" at={14} top="mt-[9px]" gap="mt-[12px]" />
      <div className="mt-[54px] flex h-[14px] items-center text-[12px] text-[#dcdcdc]">
        <span className="ml-[2px] w-[49px]">AGC</span>
        <span>Tx-ATT</span>
      </div>
      <div className="-ml-[2px] mt-[6px] flex h-[20px] w-[99px] border border-[#d8d8d8] text-[12px] text-white">
        <div className="flex w-[32px] items-center bg-[#2a2a2a] pl-[3px]">Med</div>
        <div className="flex w-[15px] items-center justify-center bg-[#f0f0f0]"><Tri /></div>
        <div className="flex w-[35px] items-center justify-center bg-[#7f1f1f]">21</div>
        <SpinCol className="w-[15px] bg-[#cfcfcf]" />
      </div>
      <Btn className="ml-[11px] mt-[60px] h-[20px] w-[75px]">SQL:  0</Btn>
      <Slider at={87} className="mt-[9px] w-[97px]" />
      <div className="ml-[7px] mt-[5px] h-[2px] w-[83px] bg-black" />
    </div>
  )
}

function RightColumn() {
  const band = ["160", "80", "60", "40", "30", "20", "17", "15", "12", "10", "6", "LFMF", "VHF+", "WWV", "SWL"]
  const mode = ["LSB", "USB", "DSB", "CWL", "CWU", "FM", "AM", "SAM", "SPEC", "DIGL", "DIGU", "DRM"]
  return (
    <div className="w-[185px] shrink-0 pl-[6px]">
      <div className="-mt-[6px] flex h-[32px] w-[173px] items-center gap-[5px] border border-[#d8d8d8] pl-[12px]">
        <DarkSelect value="Signal" dim className="h-[22px] w-[71px]" />
        <DarkSelect value="Fwd Pwr" className="h-[22px] w-[72px]" />
      </div>
      <div className="ml-[11px] mt-[116px] grid grid-cols-[48px_48px_48px] auto-rows-[20px] gap-[3px]">
        {band.map(b => <Btn key={b} gray blue={b === "40"} className="h-[20px] tracking-[0.3px]">{b}</Btn>)}
      </div>
      <div className="ml-[11px] mt-[122px] grid grid-cols-[48px_48px_48px] auto-rows-[20px] gap-[3px]">
        {mode.map(b => <Btn key={b} gray blue={b === "LSB"} className="h-[20px] tracking-[0.3px]">{b}</Btn>)}
      </div>
    </div>
  )
}

function MiddleBand() {
  return (
    <div className="flex h-[671px] shrink-0">
      <LeftColumn />
      <div className="flex w-[2080px] shrink-0 flex-col bg-black">
        <Spectrum />
        <Waterfall />
        <div className="flex h-[24px] items-center text-[12px]">
          <span className="ml-[14px] font-bold text-white">Blobs</span>
          <div className="ml-[15px] flex h-[24px] w-[50px] items-center justify-center bg-[#b4b4b4] font-bold text-[#ebebeb]">Peak</div>
          <span className="ml-[8px] text-[#1e90ff]">1/2</span>
          <span className="ml-[1386px] w-[90px] text-[#1e90ff]">-701.4Hz</span>
          <span className="w-[83px] text-[#1e90ff]">-6.0dBm</span>
          <span className="w-[96px] text-[#1e90ff]">7.118 299 MHz</span>
          <div className="h-[24px] w-[5px] bg-[#b4b4b4]" />
          <div className="flex h-[24px] flex-1 items-center bg-[#00ff00] text-black">
            <span className="w-[152px] text-center font-medium">158</span>
            <span className="ml-[66px] w-[84px] text-center">Correcting</span>
          </div>
        </div>
      </div>
      <RightColumn />
    </div>
  )
}

function BottomBand() {
  return (
    <div className="flex h-[202px] shrink-0 text-[12px] leading-[14px] text-white">
      <div className="ml-[36px] w-[398px] shrink-0">
        <div className="mt-[3px] flex h-[22px] items-center pl-[97px]">
          <span className="w-[33px] text-[#dcdcdc]">Pan:</span>
          <Slider at={97} className="w-[193px]" />
          <Btn className="ml-[9px] h-[22px] w-[48px]">Center</Btn>
        </div>
        <div className="mt-[76px]"><AdcMeter /></div>
      </div>
      <div className="ml-[49px] mt-[39px] w-[98px] shrink-0">
        <div className="grid grid-cols-[48px_47px] auto-rows-[21px] gap-x-[3px] gap-y-[2px]">
          <Btn dim>SPLT</Btn>
          <Btn dim>A &gt; B</Btn>
          <Btn>0 Beat</Btn>
          <Btn dim>A &lt; B</Btn>
          <Btn>IF-&gt;V</Btn>
          <Btn dim>A &lt;&gt; B</Btn>
          <div className="flex gap-[3px]"><Btn className="w-[28px]">RIT</Btn><Btn className="w-[17px]">0</Btn></div>
          <div className="flex gap-[2px]"><Btn className="w-[31px]">XIT</Btn><Btn className="w-[14px]">0</Btn></div>
          <DarkSpin value="0" className="mt-[1px]" />
          <DarkSpin value="0" className="mt-[1px]" />
          <Btn className="mt-[2px]">VAC1</Btn>
          <Btn className="mt-[2px]">VAC2</Btn>
        </div>
      </div>
      <div className="ml-[378px] mt-[39px] w-[212px] shrink-0">
        <div className="flex">
          <div className="grid grid-cols-[47px_48px] auto-rows-[21px] gap-x-[3px] gap-y-[2px]">
            {["NR", "ANF", "NB", "SNB", "MUT", "BIN", "MNF", "+MNF"].map(t => <Btn key={t}>{t}</Btn>)}
          </div>
          <div className="ml-[13px] w-[101px]">
            <DarkSelect value="Panafall" className="h-[21px]" />
            <div className="mt-[2px] grid grid-cols-[47px_47px] auto-rows-[21px] gap-x-[4px] gap-y-[2px] pl-[1px]">
              <Btn>AVG</Btn>
              <Btn>Peak</Btn>
              <Btn>CTUN</Btn>
            </div>
          </div>
        </div>
        <div className="mt-[1px] flex h-[14px] items-center text-[10px] text-[#d0d0d0]">
          <span className="ml-[5px] w-[63px]">Vol</span>
          <span className="w-[63px]">Pan</span>
          <span>Vol</span>
        </div>
        <div className="mt-[5px] flex items-start">
          <VSlider at={29} className="ml-[8px]" />
          <div className="ml-[13px] w-[94px]">
            <Slider at={47} className="mt-[7px] w-[94px]" />
            <Slider at={47} className="mt-[18px] w-[94px]" />
          </div>
          <VSlider at={4} className="ml-[13px]" />
          <div className="ml-[19px] mt-[5px] flex w-[48px] flex-col gap-[2px]">
            <Btn className="w-[48px]">SubRX</Btn>
            <Btn className="w-[48px]">Swap</Btn>
          </div>
        </div>
      </div>
      <div className="ml-[361px] w-[662px] shrink-0">
        <div className="mt-[2px] flex h-[24px] items-center pl-[257px]">
          <span className="w-[41px] text-[#dcdcdc]">Zoom:</span>
          <Slider at={91} className="w-[153px]" />
          <div className="ml-[8px] flex h-[24px] w-[40px] items-center justify-center bg-[#f0f0f0] text-white">ZTB</div>
          <Btn className="ml-[2px] w-[39px]">0.5x</Btn>
          <Btn blue className="ml-[2px] w-[39px]">1x</Btn>
          <Btn className="ml-[2px] w-[38px]">2x</Btn>
          <Btn className="ml-[2px] w-[39px]">4x</Btn>
        </div>
        <div className="mt-[13px] flex">
          <div className="flex w-[186px] flex-col">
            <div className="flex">
              <div className="flex w-[47px] flex-col gap-[2px]">
                <Btn blue>MIC</Btn>
                <Btn>COMP</Btn>
                <Btn>VOX</Btn>
                <Btn>DEXP</Btn>
              </div>
              <div className="ml-[2px] w-[137px]">
                <div className="flex h-[21px] items-center"><Slider at={72} className="w-[97px]" /><span className="ml-[7px] font-bold">0 dB</span></div>
                <div className="mt-[2px] flex h-[21px] items-center"><Slider at={17} className="w-[97px]" /><span className="ml-[7px] font-bold">2 dB</span></div>
                <div className="mt-[2px] flex h-[21px] items-center"><Slider at={49} className="w-[97px]" /><span className="ml-[7px] font-bold">-40</span></div>
                <div className="-mt-[2px] ml-[8px] flex h-[3px] w-[83px] bg-black"><div className="w-[5px] bg-[#2fb344]" /></div>
              </div>
            </div>
            <div className="mt-[45px] whitespace-nowrap font-bold tracking-[-0.2px]">PA Profile: Default - ANAN_G2</div>
          </div>
          <div className="w-[136px]">
            <div className="text-center font-bold tracking-[-0.2px]">Transmit Profile</div>
            <DarkSelect value="Default" className="mt-[10px] h-[21px]" />
            <div className="mt-[7px] flex text-[#dcdcdc]"><span className="w-[85px]">Low</span><span>High</span></div>
            <div className="mt-[2px] flex"><DarkSpin value="100" className="w-[50px]" /><DarkSpin value="3000" className="ml-[35px] w-[51px]" /></div>
            <div className="mt-[3px] flex"><Btn className="ml-[1px] w-[48px]">RX EQ</Btn><Btn className="ml-[37px] w-[48px]">TX EQ</Btn></div>
            <Btn className="ml-[86px] mt-[3px] w-[48px]">TX FL</Btn>
          </div>
        </div>
      </div>
      <div className="ml-[25px] mt-[13px] w-[149px] shrink-0">
        <div className="grid grid-cols-[48px_48px_47px] auto-rows-[21px] gap-x-[3px] gap-y-[2px]">
          {["5.0k", "4.4k", "3.8k", "3.3k", "2.9k", "2.7k", "2.4k", "2.1k", "1.8k", "1.0k", "Var 1", "Var 2"].map(t => <Btn key={t} blue={t === "2.7k"}>{t}</Btn>)}
        </div>
        <div className="mt-[10px] flex h-[16px] items-center">
          <span className="w-[41px] text-[#dcdcdc]">Width:</span>
          <Slider at={32} className="w-[108px]" />
        </div>
        <div className="mt-[13px] flex h-[20px] items-center">
          <span className="w-[30px] text-[#dcdcdc]">Shift:</span>
          <Slider at={38} className="w-[77px]" />
          <Btn className="ml-[3px] h-[20px] w-[39px] text-[11px] font-normal">Reset</Btn>
        </div>
        <div className="mt-[6px] flex h-[20px] items-center text-[#dcdcdc]">
          <span className="w-[22px]">Low</span>
          <DarkSpin value="-2800" dim className="w-[51px]" />
          <span className="ml-[2px] w-[23px]">High</span>
          <DarkSpin value="-100" dim className="w-[51px]" />
        </div>
      </div>
    </div>
  )
}

function StatusBar() {
  return (
    <div className="flex h-[17px] shrink-0 items-center bg-[#666666] text-[12.5px] text-white">
      <div className="ml-[2px] h-[16px] w-[16px] rounded-[2px] bg-[#5c93f5]" />
      <span className="ml-[4px] w-[80px] whitespace-nowrap">2388 x 1011</span>
      <Tri c="#111111" />
      <svg width="12" height="15" viewBox="0 0 12 15" className="ml-[24px]"><rect x="1.5" y="2.5" width="9" height="10" fill="none" stroke="#35c035" strokeWidth="2.4" /><rect x="3.5" y="4.5" width="5" height="6" fill="#222222" /><path d="M0 5h12M0 10h12M4 0v15M8 0v15" stroke="#e0b030" strokeWidth="0.6" opacity="0.6" /></svg>
      <span className="ml-[3px] w-[36px]">6%</span>
      <Tri c="#111111" />
      <Zap size={15} fill="#ffe030" stroke="#ffe030" className="ml-[6px]" />
      <span className="ml-[2px] w-[42px]">13.6V</span>
      <span className="w-[52px]">2.9A</span>
      <RadioTower size={16} strokeWidth={1.3} className="text-[#ffe860]" />
      <span className="ml-[3px] w-[61px]">Rx Ant 1</span>
      <Tri c="#111111" />
      <RadioTower size={16} strokeWidth={1.3} className="ml-[7px] text-[#ffe860]" />
      <span className="ml-[4px] w-[60px]">Tx Ant 1</span>
      <Tri c="#111111" />
      <span className="ml-auto font-medium">10:01:47 utc</span>
      <span className="ml-[20px] font-medium">Sat 5 Oct 2024</span>
      <span className="ml-[22px] mr-[19px] font-medium">11:01:47 loc</span>
    </div>
  )
}

function MainWindow() {
  return (
    <div className="relative flex h-[1033px] w-[2387px] shrink-0 flex-col overflow-hidden bg-[#535353]">
      <div className="flex h-[25px] shrink-0 items-center bg-[#f0f3fb] pl-[6px] pr-[18px] text-[12px] text-[#1c1c1c]">
        <AppIcon />
        <span className="ml-[6px]">Thetis v2.10.3.6 x64 (09/15/24) (FW v2.0.0 Protocol 2) rc3</span>
        <div className="ml-auto flex items-center text-[#222222]">
          <Minus size={12} strokeWidth={1.2} />
          <Square size={11} strokeWidth={1.2} className="ml-[32px]" />
          <X size={14} strokeWidth={1.2} className="ml-[30px]" />
        </div>
      </div>
      <TopBand />
      <MiddleBand />
      <BottomBand />
      <StatusBar />
      <SetupDialog />
      <div className="pointer-events-none absolute bottom-[17px] left-0 top-[33px] w-[5px] bg-[linear-gradient(90deg,#444444,transparent)]" />
      <div className="pointer-events-none absolute bottom-[17px] right-0 top-[33px] w-[8px] bg-[linear-gradient(90deg,transparent,#3a3a3a)]" />
    </div>
  )
}

export default function App() {
  return (
    <div className="relative flex h-[1033px] w-[2963px] overflow-hidden bg-[#020b1b] font-['Liberation_Sans',sans-serif]">
      <MainWindow />
      <svg width="60" height="80" viewBox="0 0 60 80" className="absolute bottom-0 left-[2387px]">
        <path d="M0 0C22 22 42 50 56 80H0z" fill="#0a2b8c" />
      </svg>
      <AmpView />
      <PureSignal />
    </div>
  )
}
